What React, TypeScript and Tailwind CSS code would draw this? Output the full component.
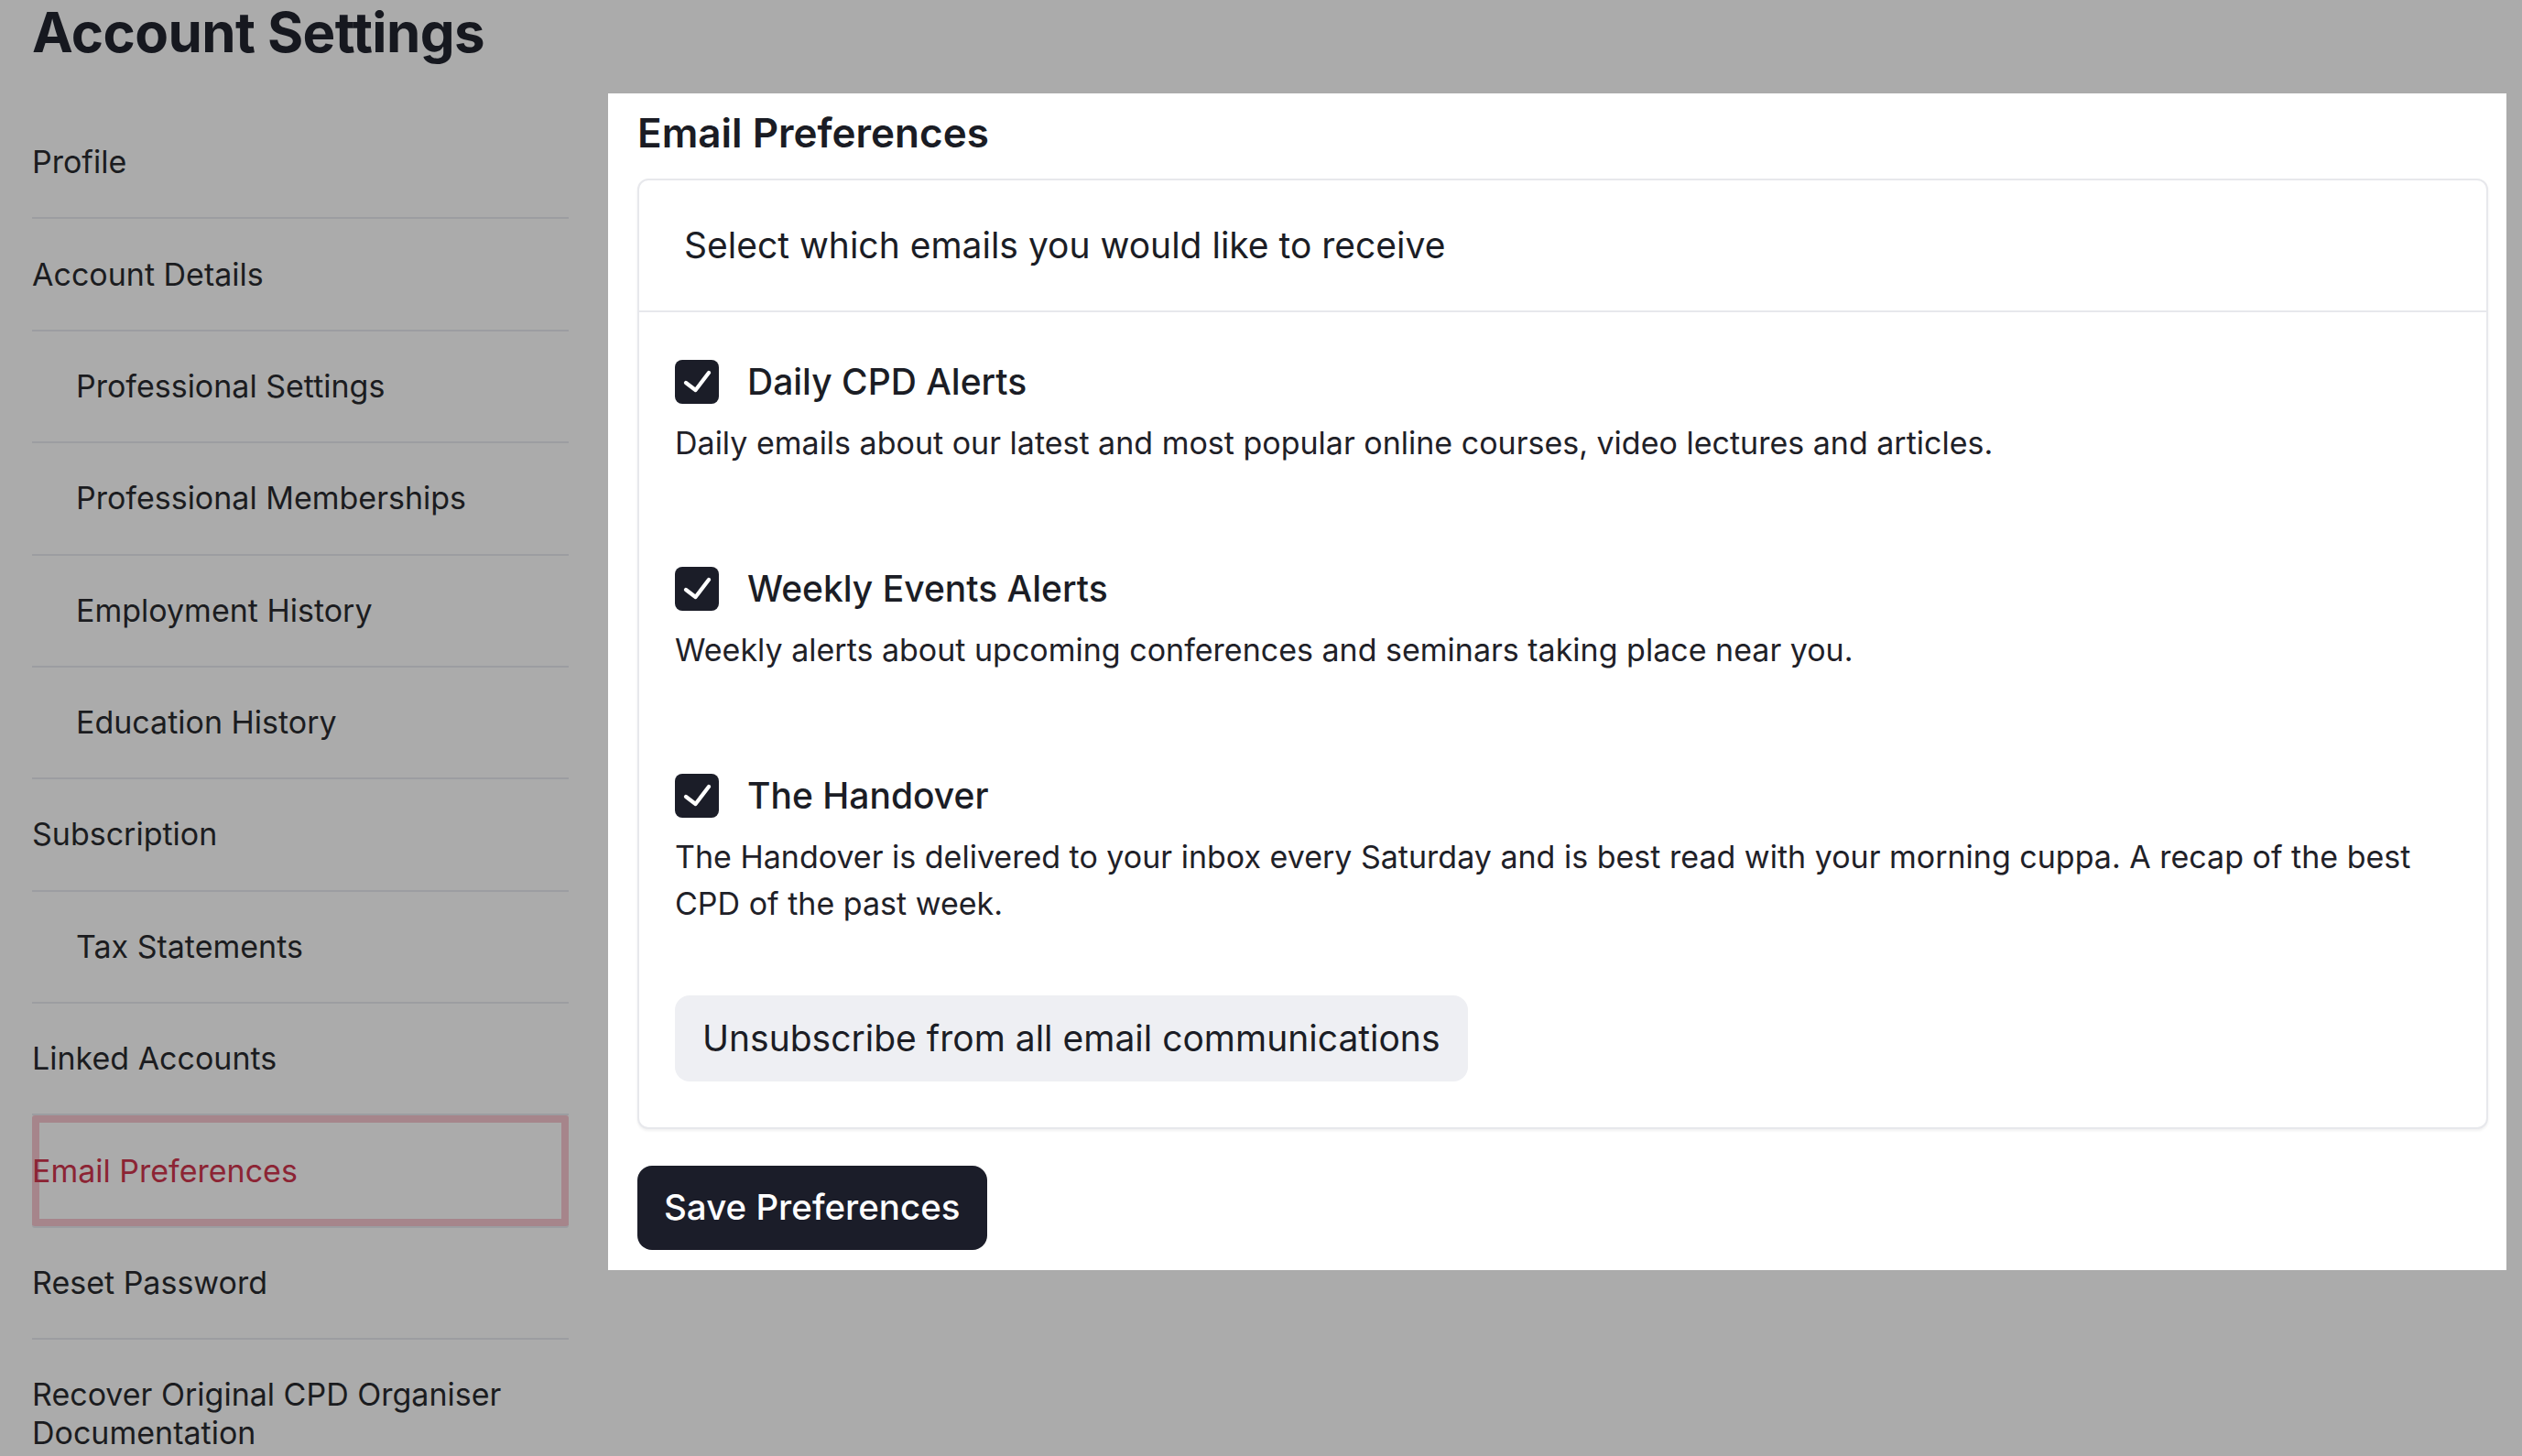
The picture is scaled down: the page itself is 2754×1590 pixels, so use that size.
import React, { useState } from 'react';

interface NavItem {
  label: string;
  indent?: boolean;
  active?: boolean;
}

const navItems: NavItem[] = [
  { label: 'Profile' },
  { label: 'Account Details' },
  { label: 'Professional Settings', indent: true },
  { label: 'Professional Memberships', indent: true },
  { label: 'Employment History', indent: true },
  { label: 'Education History', indent: true },
  { label: 'Subscription' },
  { label: 'Tax Statements', indent: true },
  { label: 'Linked Accounts' },
  { label: 'Email Preferences', active: true },
  { label: 'Reset Password' },
  { label: 'Recover Original CPD Organiser Documentation' },
];

interface Preference {
  id: string;
  title: string;
  description: string;
}

const preferences: Preference[] = [
  {
    id: 'daily',
    title: 'Daily CPD Alerts',
    description:
      'Daily emails about our latest and most popular online courses, video lectures and articles.',
  },
  {
    id: 'weekly',
    title: 'Weekly Events Alerts',
    description: 'Weekly alerts about upcoming conferences and seminars taking place near you.',
  },
  {
    id: 'handover',
    title: 'The Handover',
    description:
      'The Handover is delivered to your inbox every Saturday and is best read with your morning cuppa. A recap of the best CPD of the past week.',
  },
];

const CheckBox: React.FC<{ checked: boolean; onToggle: () => void }> = ({ checked, onToggle }) => (
  <button
    type="button"
    onClick={onToggle}
    className={`flex h-[48px] w-[48px] shrink-0 items-center justify-center rounded-[8px] ${
      checked ? 'bg-[#1b1d28]' : 'border-2 border-[#1b1d28] bg-white'
    }`}
  >
    {checked && (
      <svg viewBox="0 0 48 48" className="h-[48px] w-[48px]" fill="none">
        <path
          d="M12 25 L22.5 33 L37 14"
          stroke="white"
          strokeWidth="4.2"
          strokeLinecap="round"
          strokeLinejoin="round"
        />
      </svg>
    )}
  </button>
);

export default function App() {
  const [checked, setChecked] = useState<Record<string, boolean>>({
    daily: true,
    weekly: true,
    handover: true,
  });

  return (
    <div className="h-[1590px] overflow-hidden bg-[#ababab] pl-[35px] pr-[17px] font-['Inter','Noto_Sans',sans-serif]">
      <h1 className="text-[60px] font-bold leading-[70px] tracking-[-0.01em] text-[#16181f]">
        Account Settings
      </h1>

      <div className="mt-[32px] flex items-start gap-[43px]">
        {/* sidebar */}
        <nav className="w-[586px] shrink-0 pt-[15px]">
          {navItems.map((item) => (
            <div
              key={item.label}
              className={`border-b-2 border-[#9c9da1] py-[39.2px] text-[34px] leading-[42px] ${
                item.indent ? 'pl-[48px]' : ''
              } ${
                item.active
                  ? 'rounded-[3px] text-[#8c2434] shadow-[inset_0_0_0_8px_#a6858b]'
                  : 'text-[#1b1c20]'
              }`}
            >
              {item.label}
            </div>
          ))}
        </nav>

        {/* main panel */}
        <main className="flex-1 bg-white pb-[22px] pl-[32px] pr-[20px] pt-[17px]">
          <h2 className="text-[44px] font-semibold leading-[52px] text-[#1a1c24]">Email Preferences</h2>

          <div className="mt-[24px] rounded-[12px] border-2 border-[#e7e8ec] bg-white shadow-[0_2px_3px_rgba(0,0,0,0.06)]">
            <div className="flex h-[144px] items-center border-b-2 border-[#e7e8ec] pl-[49px] text-[39px] text-[#1b1d25]">
              Select which emails you would like to receive
            </div>

            <div className="px-[39px] pb-[50px] pt-[52px]">
              <div className="flex flex-col gap-[110px]">
                {preferences.map((pref) => (
                  <div key={pref.id}>
                    <div className="flex items-center gap-[31px]">
                      <CheckBox
                        checked={checked[pref.id]}
                        onToggle={() => setChecked((c) => ({ ...c, [pref.id]: !c[pref.id] }))}
                      />
                      <span className="text-[39px] font-medium leading-[48px] text-[#1b1d25]">
                        {pref.title}
                      </span>
                    </div>
                    <p className="mt-[17px] text-[34px] leading-[51px] text-[#1f2128]">{pref.description}</p>
                  </div>
                ))}
              </div>

              <button
                type="button"
                className="mt-[75px] flex h-[94px] items-center rounded-[16px] bg-[#eeeff3] px-[30px] text-[39px] text-[#1b1d25]"
              >
                Unsubscribe from all email communications
              </button>
            </div>
          </div>

          <button
            type="button"
            className="mt-[40px] flex h-[92px] items-center rounded-[16px] bg-[#1b1d29] px-[29px] text-[38.5px] font-medium text-white"
          >
            Save Preferences
          </button>
        </main>
      </div>
    </div>
  );
}
